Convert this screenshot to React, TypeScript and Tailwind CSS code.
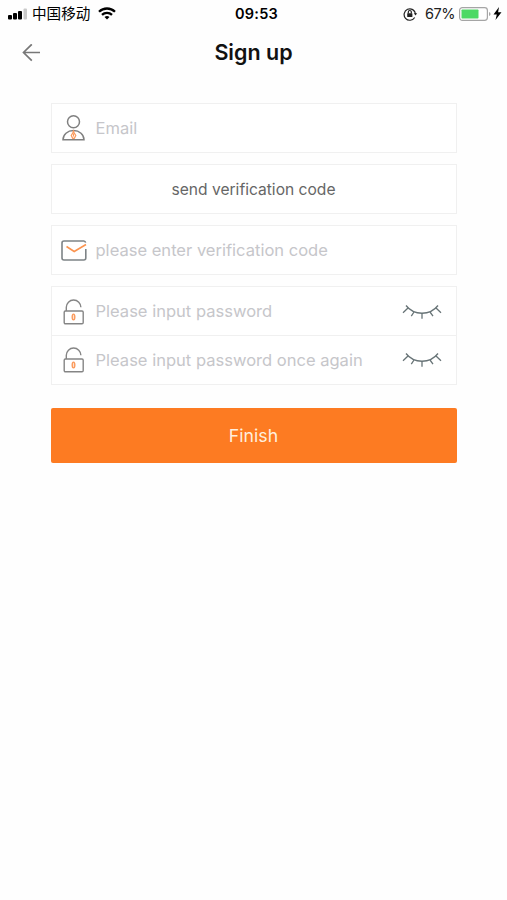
import { useState } from "react";

function UserIcon() {
  return (
    <svg width="24" height="26" viewBox="0 0 24 26" fill="none" stroke="#808080" strokeWidth="1.5">
      <circle cx="11.5" cy="6.8" r="6" />
      <path d="M1 24.8C1 19.5 5.5 15.6 11.5 15.6S22 19.5 22 24.8Z" />
      <path d="M11.5 16 10.7 18 9.2 20.5 10.7 23.4H12.3L13.8 20.5 12.3 18ZM11.5 18.6V21.4" stroke="#fb9a5c" strokeWidth="1.2" />
    </svg>
  );
}

function MailIcon() {
  return (
    <svg width="26" height="21" viewBox="0 0 26 21" fill="none" strokeWidth="1.6">
      <path d="M24.8 9V18A2 2 0 0 1 22.8 20H3A2 2 0 0 1 1 18V3A2 2 0 0 1 3 1H22.8A2 2 0 0 1 24.6 2.6" stroke="#7e8487" />
      <path d="M5.5 6.5 13.2 11.5 25 4.5" stroke="#fb9450" />
    </svg>
  );
}

function LockIcon() {
  return (
    <svg width="22" height="26" viewBox="0 0 22 26" fill="none" stroke="#858585" strokeWidth="1.4">
      <rect x="1.2" y="12" width="19" height="12.8" rx="1.2" />
      <path d="M3.3 12V8.3A7.3 7.3 0 0 1 17.9 8.3" />
      <ellipse cx="10.5" cy="18" rx="1.3" ry="2.9" fill="#fde3d2" stroke="#fb9a5c" />
    </svg>
  );
}

function ClosedEyeIcon() {
  return (
    <svg width="40" height="16" viewBox="0 0 40 16" fill="none" stroke="#687477" strokeWidth="1.3">
      <path d="M4 1.5C12 11.8 28 11.8 36 1.5" />
      <path d="M6 4 1 8.8M12 8 9.3 12.2M20 9.3V14.8M28 8 31 12.2M34 4 39 8.8" />
    </svg>
  );
}

function StatusBar() {
  return (
    <div className="grid h-[27px] grid-cols-3 items-center pl-2 pr-[5px] text-black">
      <div className="flex items-center">
        <svg width="20" height="12" viewBox="0 0 20 12">
          <rect x="0" y="7" width="4" height="4.5" rx="1" />
          <rect x="5" y="5" width="4" height="6.5" rx="1" />
          <rect x="10" y="3" width="4" height="8.5" rx="1" />
          <rect x="15.5" y="0.5" width="3.5" height="11" rx="1" fill="#c9c9c9" />
        </svg>
        <span className="ml-1 font-['Noto_Sans_CJK_SC',sans-serif] text-[14.6px] leading-none">中国移动</span>
        <svg className="ml-2" width="18" height="13" viewBox="0 0 18 13" fill="none" stroke="#000" strokeWidth="2.3">
          <path d="M1 4.8C5.5.4 12.5.4 17 4.8" />
          <path d="M4 7.9C6.8 5.2 11.2 5.2 14 7.9" />
          <path d="M6.5 10 9 12.6 11.5 10Q9 7.8 6.5 10Z" fill="#000" stroke="none" />
        </svg>
      </div>
      <div className="pl-[3px] text-center text-[14.5px] font-semibold tracking-[0.2px]">09:53</div>
      <div className="flex items-center justify-end">
        <svg width="15" height="14" viewBox="0 0 15 14" fill="none" stroke="#222" strokeWidth="1.2">
          <path d="M11.7 10.5A5.7 5.7 0 1 1 12.5 7" />
          <path d="M10.8 6.3H14.2L12.5 8.6Z" fill="#222" stroke="none" />
          <rect x="4.2" y="6.2" width="5.2" height="3.8" rx="0.5" fill="#222" stroke="none" />
          <path d="M5.3 6.4V5A1.5 1.5 0 0 1 8.3 5V6.4" />
        </svg>
        <span className="ml-[7px] pt-px text-[14.5px] leading-none tracking-[-0.5px] text-[#222]">67%</span>
        <svg className="ml-1" width="33" height="14" viewBox="0 0 33 14">
          <rect x="0.6" y="0.6" width="27.8" height="12.8" rx="2.8" fill="none" stroke="#a5a5a5" strokeWidth="1.2" />
          <rect x="2.5" y="2.5" width="17" height="9" rx="0.8" fill="#4cd964" />
          <path d="M30 5V9Q31.6 8.5 31.6 7T30 5Z" fill="#a5a5a5" />
        </svg>
        <svg className="ml-px" width="9" height="13" viewBox="0 0 9 13">
          <path d="M6 0 0.5 7.4H3.8L2.5 13 8.5 5.3H5.1Z" />
        </svg>
      </div>
    </div>
  );
}

function PasswordField({ placeholder }: { placeholder: string }) {
  const [visible, setVisible] = useState(false);
  return (
    <label className="flex h-12 items-center pl-[11px] pr-[14px]">
      <LockIcon />
      <input
        type={visible ? "text" : "password"}
        placeholder={placeholder}
        className="ml-[11px] min-w-0 flex-1 text-[16.55px] text-[#333] outline-none placeholder:text-[#c6c6ca]"
      />
      <button type="button" aria-label="Toggle password" onClick={() => setVisible(!visible)}>
        <ClosedEyeIcon />
      </button>
    </label>
  );
}

export default function App() {
  return (
    <div className="min-h-screen bg-[#fefefe] font-[Inter,'Noto_Sans_CJK_SC',sans-serif]">
      <StatusBar />
      <header className="grid h-[51px] grid-cols-3 items-center pl-[22px] pr-[22px]">
        <button type="button" aria-label="Back">
          <svg width="19" height="18" viewBox="0 0 19 18" fill="none" stroke="#777" strokeWidth="1.7">
            <path d="M9.8 0.3 1.5 8.5 9.8 16.7M1.5 8.5H18" />
          </svg>
        </button>
        <h1 className="text-center text-[21.5px] font-semibold text-[#111]">Sign up</h1>
      </header>

      <form className="mx-auto mt-[25px] w-[406px]" onSubmit={(e) => e.preventDefault()}>
        <label className="flex h-[50px] items-center border border-[#f0f0f0] bg-white pl-[10px]">
          <UserIcon />
          <input
            type="email"
            placeholder="Email"
            className="ml-[10px] min-w-0 flex-1 text-[16.55px] text-[#333] outline-none placeholder:text-[#c6c6ca]"
          />
        </label>
        <button
          type="button"
          className="mt-[11px] h-[50px] w-full border border-[#f0f0f0] bg-white pt-px text-[15.6px] text-[#666]"
        >
          send verification code
        </button>
        <label className="mt-[11px] flex h-[50px] items-center border border-[#f0f0f0] bg-white pl-[9px]">
          <MailIcon />
          <input
            placeholder="please enter verification code"
            className="ml-[9px] min-w-0 flex-1 text-[16.55px] text-[#333] outline-none placeholder:text-[#c6c6ca]"
          />
        </label>
        <div className="mt-[11px] divide-y divide-[#f0f0f0] border border-[#f0f0f0] bg-white pt-px">
          <PasswordField placeholder="Please input password" />
          <PasswordField placeholder="Please input password once again" />
        </div>
        <button type="submit" className="mt-[23px] h-[55px] w-full rounded-[2px] bg-[#fd7b22] pt-px text-[17.7px] text-[#ffeedd]">
          Finish
        </button>
      </form>
    </div>
  );
}
